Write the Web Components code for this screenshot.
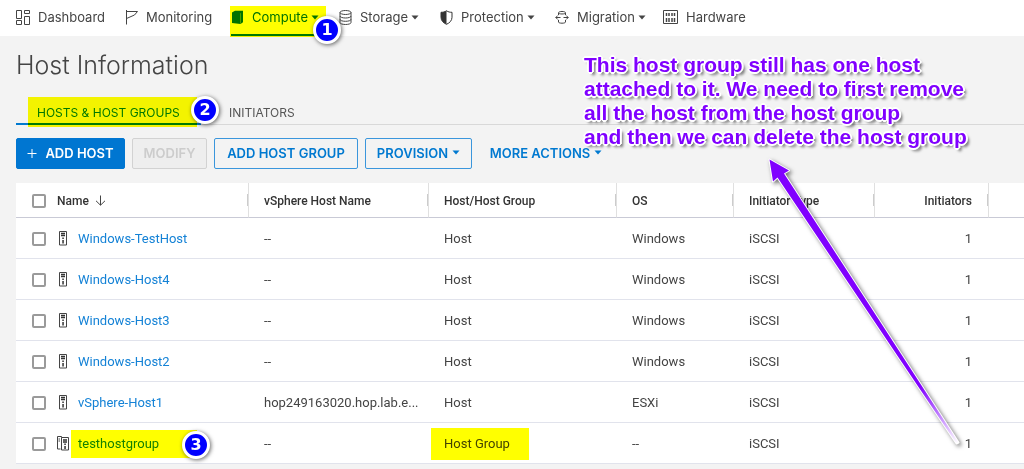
<!DOCTYPE html>
<html lang="en">
<head>
<meta charset="utf-8">
<title>Host Information</title>
<style>
html{background:#f3f3f3}
body{margin:0;overflow-x:hidden;background:#f3f3f3;font-family:Inter,"Open Sans",sans-serif;color:#444}
</style>
</head>
<body>
<host-page></host-page>
<script>
const define = (name, css, html, setup) => customElements.define(name, class extends HTMLElement {
  connectedCallback() {
    if (this.shadowRoot) return;
    const root = this.attachShadow({mode: 'open'});
    const markup = typeof html === 'function' ? html(this) : html;
    root.innerHTML = `<style>*{box-sizing:border-box}${css}</style>${markup}`;
    if (setup) setup(this, root);
  }
});

const icons = {
  dashboard: [15, 15, '<g fill="none" stroke="#444"><path d="M.5.5h5v8h-5zM8.5.5h5v3h-5zM.5 10.500h5v4h-5zM8.500 6.500h5v8h-5z"/></g>'],
  flag: [14, 15, '<path d="M1.500 0v14.500M1.500 1.500h11L9.500 5l-8 3.500" fill="none" stroke="#444"/>'],
  compute: [14, 15, '<path d="M1 2.500L4 .8h8v11.500L9.500 14 1 13z" fill="#0072a3"/><path d="M9.500 3.200v10.500" stroke="#6ab0d0" stroke-width=".7"/>'],
  storage: [14, 15, '<g fill="none" stroke="#444"><ellipse cx="6.500" cy="2.500" rx="5.500" ry="2"/><path d="M1 2.500v10c0 1.200 2.500 2 5.500 2s5.500-.8 5.500-2v-10M1 6c0 1.200 2.500 2 5.500 2S12 7.200 12 6M1 9.300c0 1.200 2.500 2 5.500 2s5.500-.8 5.500-2"/></g>'],
  shield: [14, 15, '<path d="M6.500.8C4.700 2 3 2.300 1 2.300v5c0 3.300 2.400 5.700 5.500 7 3.100-1.300 5.500-3.700 5.500-7v-5c-2 0-3.700-.3-5.500-1.500z" fill="none" stroke="#333"/><path d="M6.500.8C4.700 2 3 2.300 1 2.300v5c0 3.300 2.400 5.700 5.500 7z" fill="#333"/>'],
  migrate: [15, 15, '<g fill="none" stroke="#444"><path d="M3.500 5V2.800C3.500 1 10.500 1 10.500 2.800V5M3.500 10v2c0 1.600 7 1.600 7 0v-2M3.500 3c0 1.300 7 1.300 7 0M5.500 7.500H.8m2-2l-2 2 2 2M8.500 7.500h4.700m-2-2l2 2-2 2"/></g>'],
  hardware: [16, 15, '<path d="M.5.5h14v13H.5z" fill="none" stroke="#444"/><path d="M3.500 3v3m2.500-3v3m3-3v3m2.500-3v3M3.500 8v4m2.500-4v4m3-4v4m2.500-4v4" stroke="#444" stroke-width="1.500"/>'],
  caret: [8, 5, '<path d="M.5.5h7L4 4.500z" fill="currentColor"/>'],
  plus: [10, 10, '<path d="M5 1v9M.5 5.500h9" stroke="currentColor" fill="none"/>'],
  down: [11, 11, '<path d="M5.500.5v9.500M1 5.800l4.500 4.400L10 5.800" stroke="#444" fill="none"/>'],
  host: [12, 15, '<path d="M2.500.500h7v13.500h-7z" fill="none" stroke="#444"/><path d="M4 2.500h4M4 4.500h4" stroke="#333" stroke-width="1.300"/><path d="M5.300 6.500h1.500v1.500H5.300zM5.300 9h1.500v3.500H5.300z" fill="#333"/>'],
  group: [12, 15, '<path d="M3.500 13h-3V.500h4v1M1.500 3h1.500M1.500 5h1.500M4.500 1.500h7v12.500h-7z" fill="none" stroke="#444"/><path d="M6 4h4M6 6h4" stroke="#333" stroke-width="1.300"/><path d="M7.300 7.500h1.500V9H7.300zM7.300 10h1.500v3H7.300z" fill="#333"/>']
};
define('ui-icon', ':host{display:inline-flex;flex:none}svg{display:block}', el => {
  const [w, h, shape] = icons[el.getAttribute('name')];
  return `<svg width="${w}" height="${h}" viewBox="0 0 ${w} ${h}" aria-hidden="true">${shape}</svg>`;
});

define('step-badge',
  ':host{position:absolute;display:flex;align-items:center;justify-content:center;box-sizing:border-box;width:28px;height:28px;border:3px solid #fff;border-radius:50%;background:#00f;color:#fff;font:bold 16px/20px "DejaVu Sans",sans-serif;box-shadow:1px 1px 4px #0009;z-index:2}',
  '<slot></slot>');

define('nav-item',
  `:host{display:block;position:relative}
  a{display:flex;align-items:center;height:36px;padding-bottom:2px;color:#444;text-decoration:none;font-size:13px;line-height:16px;white-space:nowrap}
  .label{margin:0 3px 0 7px}
  :host([active]) a{color:#0072a3}
  .line{position:absolute;left:0;bottom:0;width:86px;height:2px;background:#0079b8}
  .mark{position:absolute;left:-1px;top:6px;width:96px;height:31px;background:#ff0;mix-blend-mode:multiply}
  step-badge{left:82px;top:16px}`,
  el => `<a href="#"><ui-icon name="${el.getAttribute('icon')}"></ui-icon><span class="label"><slot></slot></span>${el.hasAttribute('menu') ? '<ui-icon name="caret"></ui-icon>' : ''}</a>${el.hasAttribute('active') ? '<div class="line"></div><div class="mark"></div><step-badge>1</step-badge>' : ''}`);

define('main-nav',
  ':host{display:block;background:#fff}nav{display:grid;grid-template-columns:109px 106px 108px 101px 115px 108px auto;padding-left:16px}',
  `<nav><nav-item icon="dashboard">Dashboard</nav-item><nav-item icon="flag">Monitoring</nav-item><nav-item icon="compute" menu active>Compute</nav-item><nav-item icon="storage" menu>Storage</nav-item><nav-item icon="shield" menu>Protection</nav-item><nav-item icon="migrate" menu>Migration</nav-item><nav-item icon="hardware">Hardware</nav-item></nav>`);

define('tab-bar',
  `:host{display:flex;height:29px;border-bottom:1px solid #d8d8d8}
  a{position:relative;display:block;padding:9px 0 0 21px;height:29px;color:#555;font-size:12px;line-height:16px;text-decoration:none;white-space:nowrap}
  .on{width:192px;color:#0079b8}
  .line{position:absolute;left:0;bottom:0;width:185px;height:2px;background:#0079d0}
  .mark{position:absolute;left:12px;top:1px;width:169px;height:30px;background:#ff0;mix-blend-mode:multiply}
  step-badge{left:175px;top:0}`,
  `<a href="#" class="on">HOSTS &amp; HOST GROUPS<span class="line"></span><span class="mark"></span><step-badge>2</step-badge></a><a href="#">INITIATORS</a>`);

define('action-button',
  `:host{display:block}
  button{display:flex;align-items:center;justify-content:center;gap:4px;height:31px;padding:0 8px 2px;border:1px solid #3a96dc;border-radius:2px;background:transparent;color:#0079d0;font:600 13px/16px Inter,sans-serif;white-space:nowrap;width:100%}
  :host([kind=primary]) button{background:#0076d1;border-color:#0076d1;color:#fff;gap:8px}
  :host([kind=plain]) button{border-color:transparent}
  button:disabled{border-color:#d2d2d2;background:#eee;color:#ccc}`,
  el => `<button type="button" ${el.hasAttribute('disabled') ? 'disabled' : ''}>${el.getAttribute('kind') === 'primary' ? '<ui-icon name="plus"></ui-icon>' : ''}<slot></slot>${el.hasAttribute('menu') ? '<ui-icon name="caret"></ui-icon>' : ''}</button>`);

define('action-bar',
  ':host{display:grid;grid-template-columns:109px 75px 144px 107px 134px;gap:7px}',
  `<action-button kind="primary">ADD HOST</action-button><action-button disabled>MODIFY</action-button><action-button>ADD HOST GROUP</action-button><action-button menu>PROVISION</action-button><action-button kind="plain" menu>MORE ACTIONS</action-button>`);

const hosts = [
  ['Windows-TestHost', '--', 'Host', 'Windows'],
  ['Windows-Host4', '--', 'Host', 'Windows'],
  ['Windows-Host3', '--', 'Host', 'Windows'],
  ['Windows-Host2', '--', 'Host', 'Windows'],
  ['vSphere-Host1', 'hop249163020.hop.lab.e...', 'Host', 'ESXi'],
  ['testhostgroup', '--', 'Host Group', '--']
];
define('host-table',
  `:host{display:block;background:#fff;font-family:Roboto,sans-serif}
  table{width:100%;table-layout:fixed;border-collapse:separate;border-spacing:0}
  th,td{text-align:left;white-space:nowrap;padding:0 16px;border-bottom:1px solid #e1e3ec}
  th{position:relative;height:35px;padding-top:1px;font-size:12px;line-height:16px;font-weight:500;color:#333;border-bottom-color:#c9cad6}
  th:not(:last-child){border-right:1px solid #e0e0e0}
  th:not(:last-child)::after{content:"";position:absolute;right:0;top:11px;width:1px;height:12px;background:#ccc}
  td{height:41px;padding-top:1px;font-size:13px;line-height:16px;color:#444}
  th + th,td + td{padding-left:15px}
  .num{text-align:right}
  td.num{padding-right:17px}
  .name{display:flex;align-items:center}
  input{appearance:none;flex:none;width:14px;height:14px;margin:0;border:2px solid #9a9a9a;border-radius:2px;background:#fff}
  th input{margin-right:11px}
  th ui-icon{margin-left:6px}
  td ui-icon{margin:0 9px 0 11px}
  a{color:#1482d6;text-decoration:none}
  .target{position:relative}
  .mark{position:absolute;background:#ff0;mix-blend-mode:multiply}
  .target .mark{left:-7px;top:-6px;width:126px;height:28px}
  .kind{position:relative}
  .kind .mark{left:-13px;top:-8px;width:98px;height:32px}
  step-badge{left:104px;top:-5px}`,
  `<table><colgroup><col style="width:233px"><col style="width:180px"><col style="width:188px"><col style="width:117px"><col style="width:141px"><col style="width:114px"><col></colgroup>
  <thead><tr><th><span class="name"><input type="checkbox" aria-label="Select all"><span>Name</span><ui-icon name="down"></ui-icon></span></th><th>vSphere Host Name</th><th>Host/Host Group</th><th>OS</th><th>Initiator Type</th><th class="num">Initiators</th><th></th></tr></thead>
  <tbody>${hosts.map(([name, vs, kind, os]) => {
    const group = kind === 'Host Group';
    return `<tr><td><span class="name"><input type="checkbox" aria-label="Select ${name}"><ui-icon name="${group ? 'group' : 'host'}"></ui-icon><span class="${group ? 'target' : ''}"><a href="#">${name}</a>${group ? '<span class="mark"></span><step-badge>3</step-badge>' : ''}</span></span></td><td>${vs}</td><td><span class="kind">${kind}${group ? '<span class="mark"></span>' : ''}</span></td><td>${os}</td><td>iSCSI</td><td class="num">1</td><td></td></tr>`;
  }).join('')}</tbody></table>`);

define('callout-note',
  `:host{position:absolute;left:584px;top:53px;pointer-events:none;z-index:3}
  p{margin:0;color:#8000ff;font:bold 21px/24px "Liberation Sans",Arial,sans-serif;white-space:nowrap;text-shadow:-1px -1px #fff,1px -1px #fff,-1px 1px #fff,1px 1px #fff,-2px 0 #fff,2px 0 #fff,0 2px #fff,0 -2px #fff,3px 3px 3px #0009}
  svg{position:absolute;left:176px;top:97px;overflow:visible;filter:drop-shadow(2px 2px 2px #0008)}`,
  `<p><slot></slot></p>
  <svg width="210" height="300" viewBox="760 150 210 300" aria-hidden="true"><defs><linearGradient id="fade" gradientUnits="userSpaceOnUse" x1="769" y1="160" x2="958" y2="443"><stop offset="0" stop-color="#8000ff"/><stop offset=".8" stop-color="#8000ff"/><stop offset="1" stop-color="#fff"/></linearGradient></defs><path d="M769.500 159.500L773 181.500L777.500 177.500L956.500 443.500L958.500 442.500L784 173.500L789 170.500Z" fill="url(#fade)" stroke="#fff" stroke-width="2" stroke-linejoin="round" paint-order="stroke"/></svg>`);

define('host-page',
  `:host{display:block;position:relative}
  main{display:block;padding-left:16px}
  h1{margin:0;padding:13px 0 15px;font-size:25px;line-height:32px;font-weight:300;color:#444}
  action-bar{margin:13px 0 14px}`,
  `<main-nav></main-nav><main><h1>Host Information</h1><tab-bar></tab-bar><action-bar></action-bar><host-table></host-table></main>
  <callout-note>This host group still has one host<br>attached to it. We need to first remove<br>all the host from the host group<br>and then we can delete the host group</callout-note>`);
</script>
</body>
</html>
